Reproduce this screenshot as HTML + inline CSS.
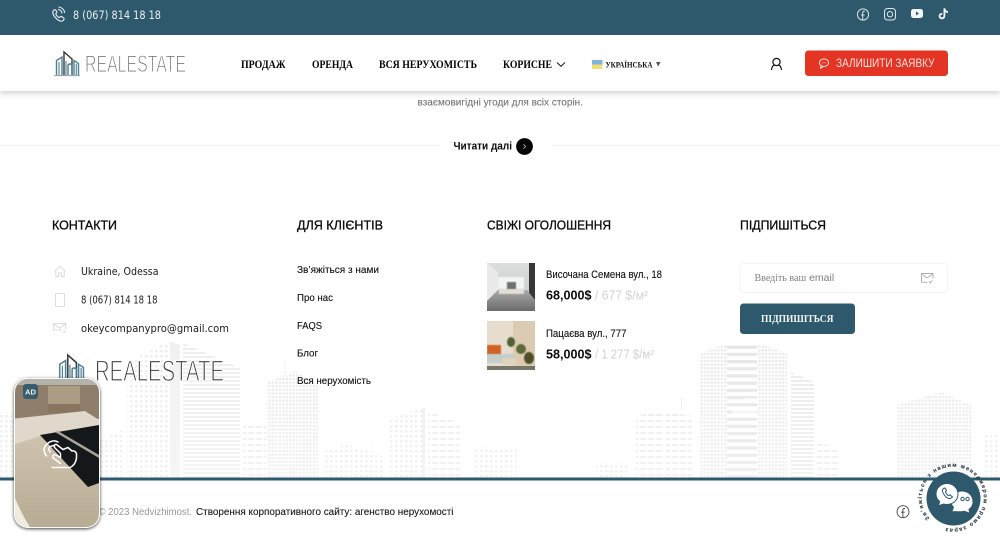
<!DOCTYPE html>
<html lang="uk"><head><meta charset="utf-8"><title>Realestate</title>
<style>
html,body{margin:0;padding:0;background:#fff;width:1000px;height:543px;overflow:hidden}
svg{display:block}
text{font-family:"Liberation Sans","Noto Sans CJK SC",sans-serif}
.serif{font-family:"Liberation Serif","Noto Serif CJK SC",serif;font-weight:bold}
.h{font-size:13px;fill:#0a0a0a;stroke:#0a0a0a;stroke-width:.32}
.p{font-family:"DejaVu Sans",sans-serif;font-size:10.2px;fill:#1c1c1c}
.l{font-size:10.5px;fill:#111;stroke:#111;stroke-width:.12}
.b{font-size:12.5px;font-weight:bold;fill:#0c0c0c}
.g{font-size:12.5px;fill:#d2d2d2}
.n{font-size:11.5px;fill:#050505}
</style></head><body>
<svg xmlns="http://www.w3.org/2000/svg" width="1000" height="543" viewBox="0 0 1000 543">
<defs>
<pattern id="d" width="3.4" height="3.6" patternUnits="userSpaceOnUse"><rect width="2.4" height="2.2" fill="#eaeaea"/></pattern>
<pattern id="d2" width="5" height="5" patternUnits="userSpaceOnUse"><rect width="2.6" height="2.4" fill="#ededed"/></pattern>
<pattern id="s" width="10" height="4" patternUnits="userSpaceOnUse"><rect width="10" height="2" fill="#ebebeb"/></pattern>
<pattern id="s2" width="8" height="6" patternUnits="userSpaceOnUse"><rect width="6.4" height="2" fill="#ededed"/></pattern>
<pattern id="tb" x="0" y="0" width="32" height="7.2" patternUnits="userSpaceOnUse"><rect width="32" height="3.2" fill="#e6e6e6"/></pattern>
<linearGradient id="fade" x1="0" y1="0" x2="0" y2="1"><stop offset="0" stop-color="#fff" stop-opacity="0"/><stop offset="1" stop-color="#fff" stop-opacity=".35"/></linearGradient>
<linearGradient id="floor" x1="0" y1="0" x2="0" y2="1"><stop offset="0" stop-color="#cfc3b0"/><stop offset="1" stop-color="#b8ab94"/></linearGradient>
<linearGradient id="ph1" x1="0" y1="0" x2="0" y2="1"><stop offset="0" stop-color="#dcdddd"/><stop offset=".6" stop-color="#cfd0d0"/><stop offset="1" stop-color="#b5b5b5"/></linearGradient>
<linearGradient id="fl1" x1="0" y1="0" x2="0" y2="1"><stop offset="0" stop-color="#a9a9a9"/><stop offset="1" stop-color="#6a6a6b"/></linearGradient>
<clipPath id="adc"><rect x="15" y="379" width="84" height="148" rx="13"/></clipPath>
<clipPath id="i1"><rect x="487" y="263" width="48" height="48"/></clipPath>
<clipPath id="i2"><rect x="487" y="321" width="48" height="49"/></clipPath>
<clipPath id="twr"><path d="M700 354Q742 332 787 354V478H700Z"/></clipPath>
<path id="ring" d="M929.8 518.5A31 31 0 1 1 932 520.7"/>
<filter id="bl"><feGaussianBlur stdDeviation=".6"/></filter>
<filter id="bl2"><feGaussianBlur stdDeviation=".35"/></filter>
<filter id="sh" x="-20%" y="-20%" width="140%" height="140%"><feDropShadow dx="0" dy="1" stdDeviation="1.6" flood-color="#000" flood-opacity=".75"/></filter>
<filter id="hs" x="-5%" y="-20%" width="110%" height="150%"><feDropShadow dx="0" dy="2" stdDeviation="3" flood-color="#000" flood-opacity=".2"/></filter>
<g id="logoicon" fill="none" stroke-width="1.4">
<path d="M2.5 24V9.5L8 6V24" stroke="#4e8196"/>
<path d="M10 24V1L18 8V24" stroke="#38383c"/>
<path d="M14 24V14.5Q14 13 16 13T18 15V24" stroke="#4e8196"/>
<path d="M20 24V9.5L24.5 12.5V24" stroke="#4e8196"/>
<path d="M5 24V11M12 24V10M22.3 24V13" stroke="#4e8196" stroke-width="1.1"/>
<path d="M0 24.6H26" stroke="#8b9aa1" stroke-width="1"/>
</g>
</defs>

<rect width="1000" height="543" fill="#fff"/>

<!-- city skyline -->
<g filter="url(#bl2)">
<rect x="0" y="412" width="15" height="66" fill="url(#d2)"/>
<path d="M100 440L122 430V478H100Z" fill="url(#d2)"/>
<path d="M127 362L168 342V478H127Z" fill="url(#d2)"/>
<path d="M170 341V478H180V345Z" fill="#f1f1f1"/>
<path d="M183 343L240 368V478H183Z" fill="url(#s)" opacity=".85"/>
<rect x="243" y="424" width="23" height="54" fill="url(#s2)"/>
<path d="M267 382L284 376V358H286V376L295 371L318 384V478H267Z" fill="url(#d)"/>
<path d="M323 452L345 444L372 452V438H374V452L384 458V478H323Z" fill="url(#d2)"/>
<path d="M388 420L422 408V478H388Z" fill="url(#d2)"/>
<rect x="422" y="408" width="3" height="70" fill="#eee"/>
<path d="M428 410L460 424V478H428Z" fill="url(#s2)"/>
<rect x="475" y="447" width="17" height="31" fill="url(#d2)"/>
<rect x="492" y="450" width="25" height="28" fill="url(#d2)"/>
<rect x="596" y="462" width="34" height="16" fill="url(#d2)"/>
<path d="M636 416L663 410V478H636Z" fill="url(#s2)"/>
<path d="M666 411L692 416V478H666Z" fill="url(#s2)"/>
<path d="M681 397h1v13h-1z" fill="#eee"/>
<g clip-path="url(#twr)">
<rect x="700" y="340" width="27" height="138" fill="url(#d)"/>
<rect x="727" y="340" width="30" height="138" fill="url(#tb)"/>
<rect x="757" y="340" width="30" height="138" fill="url(#d)"/>
<rect x="732" y="410" width="24" height="7" fill="#fff" opacity=".6"/>
<rect x="745" y="398" width="14" height="5" fill="#fff" opacity=".6"/>
</g>
<path d="M791 372L814 382V478H791Z" fill="url(#s)"/>
<path d="M817 443L838 447V478H817Z" fill="url(#s2)"/>
<path d="M897 405L941 392L972 405V478H897Z" fill="url(#d)"/>
<rect x="985" y="432" width="15" height="46" fill="url(#d2)"/>
</g>
<rect x="0" y="340" width="1000" height="138" fill="url(#fade)"/>

<!-- header -->
<rect y="35" width="1000" height="56" fill="#fff" filter="url(#hs)"/>
<rect width="1000" height="35" fill="#2e596d"/>
<g fill="none" stroke="#eaf1f4" stroke-width="1.1" stroke-linecap="round" stroke-linejoin="round">
<path d="M53.5 10.5C52 12 53 15 55.5 17.8S61 22 62.8 20.8C64.2 20 64.5 18.5 63.5 17.8L61.5 16.5C60.5 16 60 17 59.3 17.6 58.2 17.6 56 15 55.8 13.8 56.3 13 57.3 12.6 56.8 11.6L55.5 10C54.8 9.4 54 10 53.5 10.5Z"/>
<path d="M58.5 9.5A4.5 4.5 0 0 1 62 13M59 7A7 7 0 0 1 64.7 12.5"/>
</g>
<text x="73" y="19" style="font-family:'DejaVu Sans',sans-serif" font-size="11.5" fill="#e9f0f3" textLength="88" lengthAdjust="spacingAndGlyphs">8 (067) 814 18 18</text>
<g fill="none" stroke="#d6e2e7" stroke-width="1">
<circle cx="863" cy="14.5" r="5.6"/>
<path d="M864.8 11.2H864Q862.7 11.2 862.7 12.6V20M861 15H864.5"/>
<rect x="884.5" y="8.5" width="11" height="11.5" rx="3" stroke="#e0e9ed"/>
<circle cx="890" cy="14.2" r="2.7"/>
</g>
<rect x="911" y="9" width="12" height="9" rx="2.5" fill="#f4f8fa"/>
<path d="M916 11.5L919 13.5L916 15.5Z" fill="#2e596d"/>
<path d="M943.5 8.3H945.3C945.5 10 946.5 11 948 11.2V12.9C946.9 12.9 946 12.5 945.3 12V15.7C945.3 18 943.8 19.2 942 19.2 940 19.2 938.7 17.7 938.7 16 938.7 14 940.5 12.8 942.2 13V14.8C941.2 14.5 940.4 15.2 940.4 16 940.4 16.9 941.2 17.5 942 17.4 942.9 17.4 943.5 16.7 943.5 15.8Z" fill="#f4f8fa"/>

<use href="#logoicon" x="54" y="51"/>
<text x="85" y="72" font-size="24" fill="#74787b" stroke="#fff" stroke-width=".95" textLength="101" lengthAdjust="spacingAndGlyphs" paint-order="fill stroke">REALESTATE</text>

<text class="serif n" x="241" y="68" textLength="44.5" lengthAdjust="spacingAndGlyphs">ПРОДАЖ</text>
<text class="serif n" x="312" y="68" textLength="41" lengthAdjust="spacingAndGlyphs">ОРЕНДА</text>
<text class="serif n" x="379" y="68" textLength="98" lengthAdjust="spacingAndGlyphs">ВСЯ НЕРУХОМІСТЬ</text>
<text class="serif n" x="503" y="68" textLength="49" lengthAdjust="spacingAndGlyphs">КОРИСНЕ</text>
<path d="M557 62.5L561 66.3L565 62.5" fill="none" stroke="#111" stroke-width="1"/>
<rect x="592" y="60" width="10.5" height="4.5" fill="#7fb4dc"/><rect x="592" y="64.5" width="10.5" height="4.5" fill="#f3de73"/>
<text class="serif" x="605.5" y="67.5" font-size="8" fill="#111" textLength="47" lengthAdjust="spacingAndGlyphs">УКРАЇНСЬКА</text>
<path d="M656 62H660.5L658.2 66.5Z" fill="#555"/>
<g fill="none" stroke="#111" stroke-width="1.2"><circle cx="776.5" cy="62" r="3.6"/><path d="M771.5 70Q772 65.5 774.5 65M781.5 70Q781 65.5 778.5 65"/></g>
<rect x="805" y="50.5" width="143" height="25.5" rx="3.5" fill="#e43424"/>
<g fill="none" stroke="#fde9e6" stroke-width=".9"><ellipse cx="824" cy="62.7" rx="4.6" ry="3.8"/><path d="M821 66L820.5 68.3L823.5 66.5"/></g>
<path d="M822 62.7h.7M823.7 62.7h.7M825.4 62.7h.7" stroke="#fde9e6" stroke-width=".9"/>
<text x="836" y="67" font-size="11.5" fill="#fde4e0" textLength="98.5" lengthAdjust="spacingAndGlyphs">ЗАЛИШИТИ ЗАЯВКУ</text>

<!-- read more -->
<text x="417.5" y="105.5" font-size="10.5" fill="#757575" stroke="#757575" stroke-width=".1" textLength="165.5" lengthAdjust="spacingAndGlyphs">взаємовигідні угоди для всіх сторін.</text>
<rect x="0" y="145" width="440" height="1" fill="#f0f0f0"/>
<rect x="552" y="145" width="448" height="1" fill="#f0f0f0"/>
<text x="453.5" y="149.5" font-size="11" font-weight="bold" fill="#0a0a0a" textLength="58.5" lengthAdjust="spacingAndGlyphs">Читати далі</text>
<circle cx="524.5" cy="146.5" r="8.4" fill="#060606"/>
<path d="M523.4 144.3L525.6 146.5L523.4 148.7" fill="none" stroke="#bbb" stroke-width=".8"/>

<!-- headings -->
<text class="h" x="52" y="229.6" textLength="65" lengthAdjust="spacingAndGlyphs">КОНТАКТИ</text>
<text class="h" x="297" y="229.6" textLength="86" lengthAdjust="spacingAndGlyphs">ДЛЯ КЛІЄНТІВ</text>
<text class="h" x="487" y="229.6" textLength="124" lengthAdjust="spacingAndGlyphs">СВІЖІ ОГОЛОШЕННЯ</text>
<text class="h" x="740" y="229.6" textLength="86" lengthAdjust="spacingAndGlyphs">ПІДПИШІТЬСЯ</text>

<!-- contacts -->
<g fill="none" stroke="#dcdcdc" stroke-width="1">
<path d="M54.5 271.5L60 266.5L65.5 271.5M55.8 271V276.5H58.5V273.2Q60 271.8 61.5 273.2V276.5H64.3V271"/>
<rect x="55.5" y="293.5" width="9" height="13" rx="1.2"/>
<path d="M53.5 329.5V323.5H65.7V329M53.5 323.8L59.6 328.3L65.7 323.8M53.5 330H61.5M63 331.5L64.3 332.6L66 330.5"/>
</g>
<text class="p" x="81" y="275" textLength="77.5" lengthAdjust="spacingAndGlyphs">Ukraine, Odessa</text>
<text class="p" x="81" y="303.5" textLength="76.5" lengthAdjust="spacingAndGlyphs">8 (067) 814 18 18</text>
<text class="p" x="81" y="332" textLength="148" lengthAdjust="spacingAndGlyphs">okeycompanypro@gmail.com</text>

<use href="#logoicon" transform="translate(57 354) scale(1.08)"/>
<text x="95" y="381" font-size="30" fill="#37393b" stroke="#fff" stroke-width="1.15" textLength="129" lengthAdjust="spacingAndGlyphs" paint-order="fill stroke">REALESTATE</text>

<!-- links -->
<text class="l" x="297" y="273.2" textLength="82" lengthAdjust="spacingAndGlyphs">Зв’яжіться з нами</text>
<text class="l" x="297" y="301" textLength="36" lengthAdjust="spacingAndGlyphs">Про нас</text>
<text class="l" x="297" y="328.8" textLength="25" lengthAdjust="spacingAndGlyphs">FAQS</text>
<text class="l" x="297" y="356.5" textLength="21" lengthAdjust="spacingAndGlyphs">Блог</text>
<text class="l" x="297" y="384.2" textLength="74" lengthAdjust="spacingAndGlyphs">Вся нерухомість</text>

<!-- listings -->
<g clip-path="url(#i1)">
<rect x="487" y="263" width="48" height="48" fill="url(#ph1)"/>
<path d="M487 263L498 272V290L487 301Z" fill="#e8e9e9"/>
<rect x="498" y="277" width="26" height="12" fill="#f2f3f3" filter="url(#bl)"/>
<rect x="529" y="263" width="6" height="38" fill="#37373a"/>
<rect x="507" y="282" width="9" height="8" fill="#6f6f70" filter="url(#bl)"/>
<path d="M487 301L498 290H527L535 300V311H487Z" fill="url(#fl1)"/>
<rect x="499" y="289" width="25" height="5" fill="#e3dfd5" filter="url(#bl)"/>
</g>
<g clip-path="url(#i2)" >
<rect x="487" y="321" width="26" height="49" fill="#e6ddcf"/>
<rect x="513" y="321" width="22" height="49" fill="#dccbb3"/>
<rect x="487" y="345" width="14" height="10" fill="#cf6426" filter="url(#bl)"/>
<rect x="487" y="354" width="27" height="9" fill="#c3cdca" filter="url(#bl)"/>
<ellipse cx="511" cy="342" rx="4" ry="5" fill="#4f6333" filter="url(#bl)"/>
<ellipse cx="521" cy="349" rx="5" ry="5" fill="#5c6a38" filter="url(#bl)"/>
<ellipse cx="529" cy="358" rx="5" ry="6" fill="#4e5028" filter="url(#bl)"/>
<rect x="502" y="358" width="14" height="7" fill="#e0d3bd" filter="url(#bl)"/>
<rect x="487" y="366" width="48" height="4" fill="#77746a"/>
</g>
<text class="l" x="546" y="278" style="font-size:11px" textLength="116" lengthAdjust="spacingAndGlyphs">Височана Семена вул., 18</text>
<text class="b" x="546" y="299.5" textLength="45.5" lengthAdjust="spacingAndGlyphs">68,000$</text>
<text class="g" x="595" y="299.5" textLength="53" lengthAdjust="spacingAndGlyphs">/ 677 $/м²</text>
<text class="l" x="546" y="337" style="font-size:11px" textLength="80.5" lengthAdjust="spacingAndGlyphs">Пацаєва вул., 777</text>
<text class="b" x="546" y="358.5" textLength="45.5" lengthAdjust="spacingAndGlyphs">58,000$</text>
<text class="g" x="595" y="358.5" textLength="59" lengthAdjust="spacingAndGlyphs">/ 1 277 $/м²</text>

<!-- subscribe -->
<rect x="740" y="263.5" width="207.5" height="29" rx="3.5" fill="#fff" stroke="#f3f3f3"/>
<text x="754.5" y="281" font-size="10" fill="#808080"><tspan class="serif" style="font-weight:normal">Введіть ваш</tspan><tspan font-size="10.5"> email</tspan></text>
<g fill="none" stroke="#aaa" stroke-width=".9"><path d="M921.5 282V273.5H933V278.5M921.5 273.8L927 278L933 273.8M921.5 282.3H927.5M929 281.5L930.3 282.8L932.5 280.5"/></g>
<rect x="740" y="303.5" width="115" height="30.5" rx="3.5" fill="#2e596d"/>
<text class="serif" x="761" y="322" font-size="10" fill="#f1f5f6" textLength="72.5" lengthAdjust="spacingAndGlyphs">ПІДПИШІТЬСЯ</text>

<!-- footer -->
<rect y="477.5" width="1000" height="3" fill="#2e596d"/>
<text x="98.5" y="515" font-size="10.5" fill="#999" textLength="93.5" lengthAdjust="spacingAndGlyphs">© 2023 Nedvizhimost.</text>
<text x="196" y="515" font-size="10.5" fill="#181818" stroke="#181818" stroke-width=".1" textLength="257.5" lengthAdjust="spacingAndGlyphs">Створення корпоративного сайту: агенство нерухомості</text>
<g fill="none" stroke="#444" stroke-width=".9"><circle cx="903" cy="511.7" r="6"/><path d="M905 508.5H904.2Q902.9 508.5 902.9 509.9V517.5M901 512.2H904.8"/></g>

<!-- AD card -->
<rect x="14" y="378" width="86" height="150" rx="14" fill="#fff" filter="url(#sh)"/>
<g clip-path="url(#adc)">
<rect x="15" y="379" width="84" height="40" fill="#8f7e6b"/>
<rect x="15" y="379" width="84" height="6" fill="#b4b2aa"/>
<rect x="48" y="386" width="32" height="18" fill="#ab9c84"/>
<rect x="48" y="404" width="32" height="9" fill="#8a7660"/>
<rect x="15" y="435" width="84" height="92" fill="url(#floor)"/>
<path d="M15 418.5L85 411L99 420V432L40 436L15 444Z" fill="#e0d9cb"/>
<path d="M40 435L99 425V483L88 487Z" fill="#15181b"/>
<path d="M58 431L99 455V458L55 432Z" fill="#a9a49a"/>
<path d="M15 498Q22 515 30 527H15Z" fill="#f0ebdf"/>
</g>
<rect x="23" y="384" width="15" height="15" rx="3" fill="#2e596d" opacity=".9"/>
<text x="25" y="394.5" font-size="7.5" font-weight="bold" fill="#eef3f5" textLength="11" lengthAdjust="spacingAndGlyphs">AD</text>
<g fill="none" stroke="#fff" stroke-width="1.5" stroke-linecap="round" stroke-linejoin="round">
<path d="M52 467.5H70Q75.5 465 76.5 458V453.5Q75 450.5 72 451L68 447.5L63 449.5L56.5 444.5Q53.5 444 54.5 447.5L60.5 453.5V457.5L55 454.5Q52 455 53 458L60.5 463.5"/>
<path d="M46.5 456Q41.5 449 47 444T58 442M50 452Q47.5 448 50.5 446.5T54.5 446"/>
</g>

<!-- chat widget -->
<circle cx="953.5" cy="498.5" r="27" fill="#2e596d"/>
<text font-size="5.6" font-weight="bold" fill="#2b3a42" stroke="#2b3a42" stroke-width=".1" letter-spacing="1.2"><textPath href="#ring">Зв’яжіться з нашим менеджером прямо зараз</textPath></text>
<path d="M962 491.5C968 491.5 972.5 496 972.5 501.5 972.5 505 971 507.5 968.5 509L969 512.5 964.5 510.8C959 512 954.5 510.5 952.5 511.5L954 507C951.5 505 951 501 952 498 953.5 494 957.5 491.5 962 491.5Z" fill="#fff"/>
<g fill="none" stroke="#2e596d" stroke-width="1"><circle cx="962.5" cy="499" r="1.7"/><circle cx="967.5" cy="499" r="1.7"/></g>
<path d="M947 483.5C953 483.5 958 488 958 494 958 500 953 504.5 947 504.5 945.5 504.5 944.5 504.3 943.5 504L938.5 505.8 939.7 501.5C937 499.5 936 497 936 494 936 488 941 483.5 947 483.5Z" fill="#fff" stroke="#2e596d" stroke-width="1"/>
<path d="M943.5 488.5C942 489.5 942 491.5 944 494.5 946 497.5 948.5 499 950.5 498.5L952.5 497 950 494.8 948.5 495.7C947.3 495 945.7 493 945.5 491.7L946.5 490.5 945 488Z" fill="#fff" stroke="#2e596d" stroke-width="1"/>
</svg>
</body></html>
